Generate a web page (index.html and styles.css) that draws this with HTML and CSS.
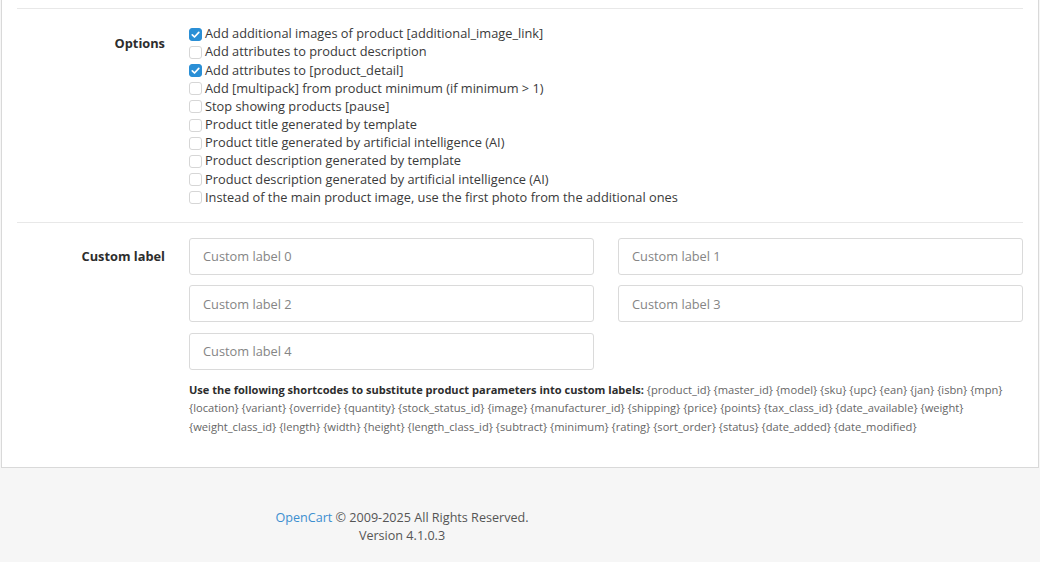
FILE: index.html
```html
<!DOCTYPE html>
<html lang="en">
<head>
<meta charset="utf-8">
<title>Feed settings</title>
<link rel="stylesheet" href="styles.css">
</head>
<body>
<div class="card">
  <hr class="sep">
  <div class="row row-opt">
    <div class="label label-opt">Options</div>
    <div class="field">
      <label class="check"><span class="box on"><svg viewBox="0 0 13 13" width="13" height="13"><path d="M3.3 6.8l2.2 2.2 4.3-4.6" fill="none" stroke="#fff" stroke-width="1.7" stroke-linecap="round" stroke-linejoin="round"/></svg></span>Add additional images of product [additional_image_link]</label>
      <label class="check"><span class="box"></span>Add attributes to product description</label>
      <label class="check"><span class="box on"><svg viewBox="0 0 13 13" width="13" height="13"><path d="M3.3 6.8l2.2 2.2 4.3-4.6" fill="none" stroke="#fff" stroke-width="1.7" stroke-linecap="round" stroke-linejoin="round"/></svg></span>Add attributes to [product_detail]</label>
      <label class="check"><span class="box"></span>Add [multipack] from product minimum (if minimum &gt; 1)</label>
      <label class="check"><span class="box"></span>Stop showing products [pause]</label>
      <label class="check"><span class="box"></span>Product title generated by template</label>
      <label class="check"><span class="box"></span>Product title generated by artificial intelligence (AI)</label>
      <label class="check"><span class="box"></span>Product description generated by template</label>
      <label class="check"><span class="box"></span>Product description generated by artificial intelligence (AI)</label>
      <label class="check"><span class="box"></span>Instead of the main product image, use the first photo from the additional ones</label>
    </div>
  </div>
  <hr class="sep">
  <div class="row">
    <div class="label label-cl">Custom label</div>
    <div class="field">
      <div class="inputs">
        <input class="input" type="text" placeholder="Custom label 0">
        <input class="input" type="text" placeholder="Custom label 1">
        <input class="input" type="text" placeholder="Custom label 2">
        <input class="input" type="text" placeholder="Custom label 3">
        <input class="input" type="text" placeholder="Custom label 4">
      </div>
      <div class="help"><b>Use the following shortcodes to substitute product parameters into custom labels:</b> {product_id} {master_id} {model} {sku} {upc} {ean} {jan} {isbn} {mpn} {location} {variant} {override} {quantity} {stock_status_id} {image} {manufacturer_id} {shipping} {price} {points} {tax_class_id} {date_available} {weight} {weight_class_id} {length} {width} {height} {length_class_id} {subtract} {minimum} {rating} {sort_order} {status} {date_added} {date_modified}</div>
    </div>
  </div>
</div>
<footer class="footer">
  <div><a class="link" href="#">OpenCart</a> © 2009-2025 All Rights Reserved.</div>
  <div>Version 4.1.0.3</div>
</footer>
</body>
</html>
```

FILE: styles.css
```css
html, body {
  margin: 0;
  padding: 0;
}
body {
  background: #f6f6f6;
  font-family: "Open Sans", "Liberation Sans", sans-serif;
  font-size: 12.8px;
  line-height: 1.4;
  color: #3a3a3a;
  width: 1040px;
  height: 562px;
  overflow: hidden;
}
.card {
  box-sizing: border-box;
  margin-left: 1px;
  width: 1038px;
  background: #fff;
  border: 1px solid #d9d9d9;
  border-top: 0;
  padding: 8px 15px 31px 15px;
}
.sep {
  border: 0;
  border-top: 1px solid #e8e8e8;
  margin: 0 0 15px 0;
}
.row {
  display: flex;
  gap: 24px;
  margin-bottom: 16px;
}
.row-opt {
  padding-top: 1px;
  margin-bottom: 15px;
}
.row:last-child {
  margin-bottom: 0;
}
.label {
  width: 148px;
  flex: none;
  text-align: right;
  font-weight: 700;
  color: #2d2d2d;
}
.label-opt {
  padding-top: 10px;
}
.label-cl {
  padding-top: 10px;
}
.field {
  flex: 1;
  min-width: 0;
}
.check {
  display: flex;
  align-items: center;
  height: 18.2px;
}
.box {
  width: 13px;
  height: 13px;
  box-sizing: border-box;
  border: 1px solid #d6d6d6;
  border-radius: 3px;
  margin-right: 3px;
  flex: none;
  display: flex;
  background: #fff;
}
.box.on {
  background: #2a8fd6;
  border-color: #2a8fd6;
}
.box svg {
  margin: -1px;
}
.inputs {
  display: grid;
  grid-template-columns: 1fr 1fr;
  column-gap: 24px;
  row-gap: 10.5px;
}
.input {
  box-sizing: border-box;
  height: 37px;
  width: 100%;
  margin: 0;
  border: 1px solid #dadada;
  border-radius: 3px;
  padding: 0 13px;
  font-family: "Open Sans", "Liberation Sans", sans-serif;
  font-size: 12.8px;
  color: #333;
  background: #fff;
  outline: none;
}
.input::placeholder {
  color: #858585;
}
.help {
  margin-top: 11px;
  font-size: 11.15px;
  line-height: 18.5px;
  color: #666;
}
.help b {
  font-size: 11.05px;
  color: #2d2d2d;
}
.footer {
  width: 804px;
  text-align: center;
  padding-top: 41px;
  font-size: 12.6px;
  line-height: 18px;
  color: #555;
}
.link {
  color: #3c8fd0;
  text-decoration: none;
}
```
